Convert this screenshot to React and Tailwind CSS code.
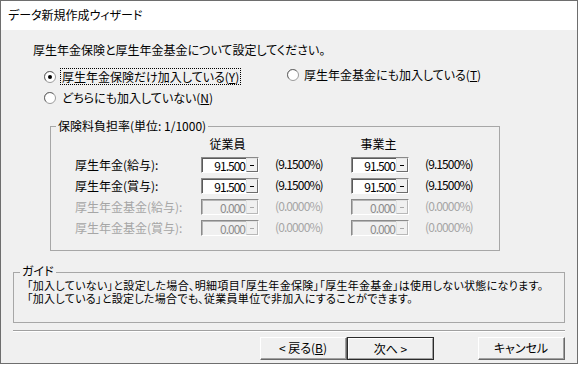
const font = "font-['Noto_Sans_CJK_JP',sans-serif] [font-feature-settings:'palt']";
const tightFont = "font-['Liberation_Sans','Noto_Sans_CJK_JP',sans-serif]";

const Radio = ({ checked }) => (
  <svg width="12" height="12" viewBox="0 0 12 12" className="shrink-0">
    <circle cx="6" cy="6" r="5.5" fill="#ffffff" stroke="#9a9a9a" />
    <path d="M2 9.5A5 5 0 0 1 9.5 2" fill="none" stroke="#6e6e6e" strokeWidth="1" />
    {checked && <circle cx="6" cy="6" r="2" fill="#000000" />}
  </svg>
);

const RateInput = ({ value, disabled }) => (
  <div className="flex h-[16px] w-[58px] border-l border-t border-[#8a8a8a] border-r-white border-b-white border-r border-b">
    <div
      className={`flex-1 text-right pr-[1px] leading-[14px] tracking-[-1px] border-l border-t border-[#5a5a5a] ${
        disabled ? "bg-[#f0f0f0] text-[#8d8d8d] border-[#b5b5b5]" : "bg-white text-black"
      }`}
    >
      {value}
    </div>
    <div
      className={`w-[12px] flex items-center justify-center border border-t-[#e3e3e3] border-l-[#e3e3e3] border-r-[#6d6d6d] border-b-[#6d6d6d] bg-[#f0f0f0] ${
        disabled ? "border-r-[#b8b8b8] border-b-[#b8b8b8]" : ""
      }`}
    >
      <div className={`w-[4px] h-[1px] ${disabled ? "bg-[#a8a8a8]" : "bg-black"}`} />
    </div>
  </div>
);

const rows = [
  { label: "厚生年金(給与):", emp: "91.500", own: "91.500", pct: "(9.1500%)" },
  { label: "厚生年金(賞与):", emp: "91.500", own: "91.500", pct: "(9.1500%)" },
  { label: "厚生年金基金(給与):", emp: "0.000", own: "0.000", pct: "(0.0000%)", disabled: true },
  { label: "厚生年金基金(賞与):", emp: "0.000", own: "0.000", pct: "(0.0000%)", disabled: true },
];

const Button = ({ children, primary }) => (
  <button
    className={`w-[87px] h-[23px] bg-[#f0f0f0] text-[12px] leading-none ${
      primary ? "border border-[#2b2b2b]" : "border border-t-white border-l-white border-r-[#696969] border-b-[#696969]"
    }`}
  >
    <span
      className={`flex h-full w-full items-center justify-center ${
        primary ? "border border-t-white border-l-white border-r-[#a0a0a0] border-b-[#a0a0a0]" : "border-r border-b border-[#a0a0a0]"
      }`}
    >
      {children}
    </span>
  </button>
);

export default function App() {
  return (
    <div className={`w-[579px] h-[365px] bg-white text-[12px] text-black ${font}`}>
      <div className="w-[578px] h-[364px] border border-[#6e6e6e] flex flex-col bg-[#f0f0f0]">
        <div className="h-[29px] bg-white pl-[7px] pt-[6px] leading-[16px]">データ新規作成ウィザード</div>

        <div className="flex flex-col">
          <div className="mt-[12px] ml-[32px] leading-[16px]">厚生年金保険と厚生年金基金について設定してください。</div>

          <div className="mt-[10px] flex items-center h-[17px]">
            <div className="ml-[43px] flex items-center w-[243px]">
              <Radio checked />
              <span className="ml-[4px] px-[1px] leading-[15px] border border-dotted border-black">
                厚生年金保険だけ加入している(<span className="underline">Y</span>)
              </span>
            </div>
            <div className="flex items-center -mt-[3px]">
              <Radio />
              <span className="ml-[5px]">
                厚生年金基金にも加入している(<span className="underline">T</span>)
              </span>
            </div>
          </div>

          <div className="mt-[4px] ml-[43px] flex items-center h-[17px]">
            <Radio />
            <span className="ml-[6px]">
              どちらにも加入していない(<span className="underline">N</span>)
            </span>
          </div>

          <fieldset className="mt-[12px] ml-[49px] w-[450px] h-[133px] border border-[#a7a7a7]">
            <legend className="ml-[5px] px-[2px] leading-[16px]">保険料負担率(単位: 1/1000)</legend>
            <div className="grid grid-cols-[126px_58px_92px_58px_auto] pl-[24px] mt-[2px]">
              <div />
              <div className="text-center pr-[5px] leading-[16px]">従業員</div>
              <div />
              <div className="text-center pr-[3px] leading-[16px]">事業主</div>
              <div />
              {rows.map((r) => (
                <div key={r.label} className="contents">
                  <div className={`mt-[5px] h-[16px] leading-[16px] ${r.disabled ? "text-[#a6a6a6]" : ""}`}>{r.label}</div>
                  <div className="mt-[5px]">
                    <RateInput value={r.emp} disabled={r.disabled} />
                  </div>
                  <div className={`mt-[4px] pl-[16px] tracking-[-0.9px] leading-[16px] ${r.disabled ? "text-[#a6a6a6]" : ""}`}>{r.pct}</div>
                  <div className="mt-[5px]">
                    <RateInput value={r.own} disabled={r.disabled} />
                  </div>
                  <div className={`mt-[4px] pl-[16px] tracking-[-0.9px] leading-[16px] ${r.disabled ? "text-[#a6a6a6]" : ""}`}>{r.pct}</div>
                </div>
              ))}
            </div>
          </fieldset>

          <fieldset className={`mt-[13px] ml-[12px] w-[552px] h-[59px] border border-[#a7a7a7] ${tightFont}`}>
            <legend className="ml-[6px] px-[2px] leading-[16px]">ガイド</legend>
            <div className="pl-[13px] text-[11px] leading-[13px] whitespace-nowrap tracking-[0.3px]">
              <div>「加入していない」と設定した場合、明細項目「厚生年金保険」「厚生年金基金」は使用しない状態になります。</div>
              <div>「加入している」と設定した場合でも、従業員単位で非加入にすることができます。</div>
            </div>
          </fieldset>

          <div className="mt-[7px] ml-[12px] w-[552px] border-t border-[#a0a0a0] border-b border-b-white" />

          <div className="mt-[5px] ml-[259px] flex">
            <Button>
              &lt; 戻る(<span className="underline">B</span>)
            </Button>
            <Button primary>次へ &gt;</Button>
            <div className="ml-[44px]">
              <Button>キャンセル</Button>
            </div>
          </div>
        </div>
      </div>
    </div>
  );
}
